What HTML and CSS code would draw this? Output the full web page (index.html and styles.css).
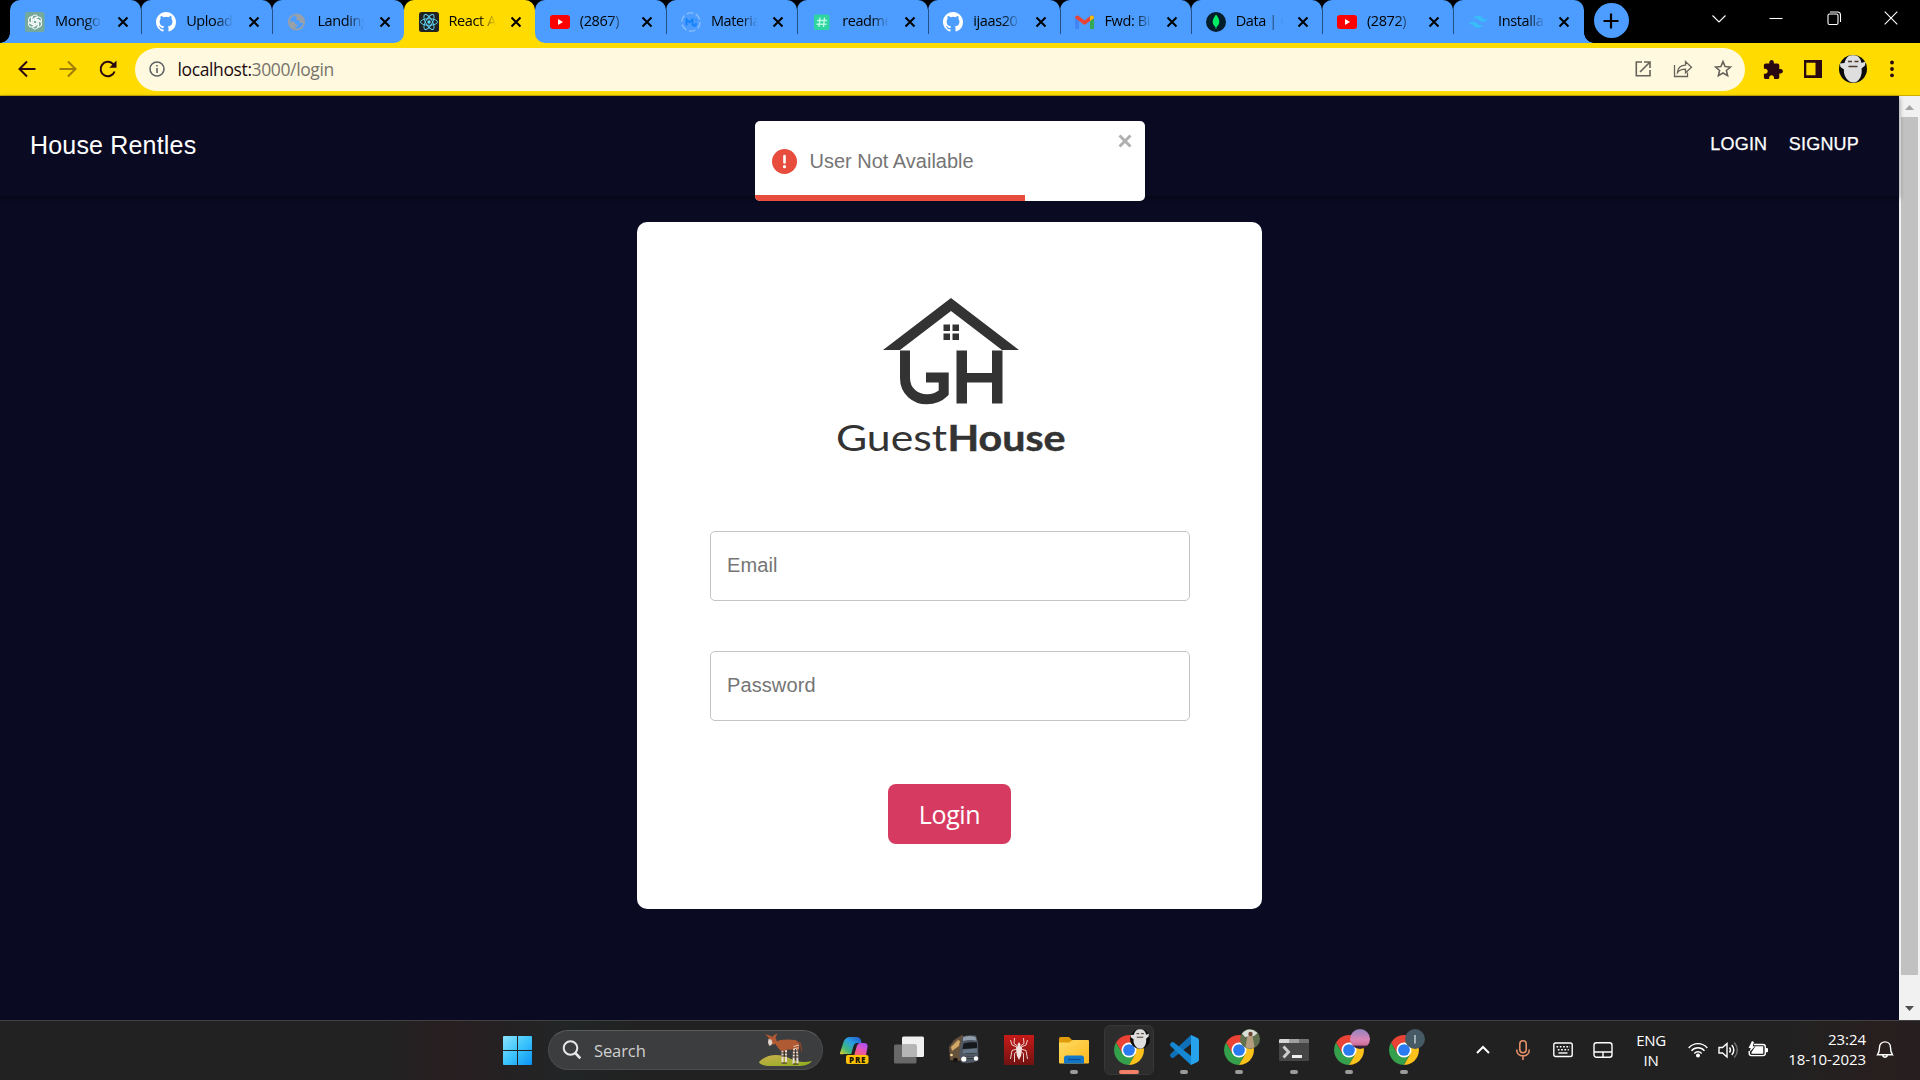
FILE: index.html
```html
<!DOCTYPE html>
<html lang="en">
<head>
<meta charset="utf-8">
<title>React App</title>
<link rel="stylesheet" href="styles.css">
</head>
<body>
<svg class="defs" aria-hidden="true">
  <defs>
    <linearGradient id="win" x1="0" y1="0" x2="1" y2="1"><stop offset="0" stop-color="#8be3fd"/><stop offset=".5" stop-color="#3cc4fc"/><stop offset="1" stop-color="#0a93f2"/></linearGradient>
    <linearGradient id="cop1" x1="0" y1="1" x2="1" y2="0"><stop offset="0" stop-color="#e8d42a"/><stop offset=".3" stop-color="#3fb67c"/><stop offset=".6" stop-color="#2b9fe0"/><stop offset="1" stop-color="#1f55d0"/></linearGradient>
    <linearGradient id="cop2" x1="0" y1="1" x2=".6" y2="0"><stop offset="0" stop-color="#f5655e"/><stop offset=".5" stop-color="#e956b0"/><stop offset="1" stop-color="#b14ff0"/></linearGradient>
    <linearGradient id="fold" x1="0" y1="0" x2="1" y2="1"><stop offset="0" stop-color="#ffdc63"/><stop offset="1" stop-color="#fbb81e"/></linearGradient>
    <linearGradient id="spi" x1="0" y1="0" x2="0" y2="1"><stop offset="0" stop-color="#c81a17"/><stop offset="1" stop-color="#701312"/></linearGradient>
    <linearGradient id="sky" x1="0" y1="0" x2="0" y2="1"><stop offset="0" stop-color="#8f84c0"/><stop offset=".55" stop-color="#dc86b6"/><stop offset=".8" stop-color="#cf6c98"/><stop offset=".86" stop-color="#3c2440"/><stop offset="1" stop-color="#30203a"/></linearGradient>
    <linearGradient id="hill" x1="0" y1="0" x2="1" y2="1"><stop offset="0" stop-color="#c9ae4e"/><stop offset="1" stop-color="#8fae1c"/></linearGradient>
    <symbol id="x" viewBox="0 0 12 12"><path d="M1.500 1.500 10.500 10.500M10.500 1.500 1.500 10.500" stroke="#000" stroke-width="2" fill="none"/></symbol>
    <symbol id="github" viewBox="0 0 16 16"><path fill="#fff" d="M8 0C3.58 0 0 3.58 0 8c0 3.54 2.29 6.53 5.47 7.59.4.07.55-.17.55-.38 0-.19-.01-.82-.01-1.49-2.01.37-2.53-.49-2.69-.94-.09-.23-.48-.94-.82-1.13-.28-.15-.68-.52-.01-.53.63-.01 1.08.58 1.23.82.72 1.21 1.87.87 2.33.66.07-.52.28-.87.51-1.07-1.78-.2-3.64-.89-3.64-3.95 0-.87.31-1.59.82-2.15-.08-.2-.36-1.02.08-2.12 0 0 .67-.21 2.2.82a7.42 7.42 0 0 1 4 0c1.53-1.04 2.2-.82 2.2-.82.44 1.1.16 1.92.08 2.12.51.56.82 1.27.82 2.15 0 3.07-1.87 3.75-3.65 3.95.29.25.54.73.54 1.48 0 1.07-.01 1.93-.01 2.2 0 .21.15.46.55.38A8.01 8.01 0 0 0 16 8c0-4.42-3.58-8-8-8z"/></symbol>
    <symbol id="youtube" viewBox="0 0 20 20"><rect x="0" y="3" width="20" height="14" rx="3" fill="#f00"/><path fill="#fff" d="M8 7v6l5-3z"/></symbol>
    <symbol id="chrome" viewBox="2 2 44 44"><path fill="#ea4335" d="M24 24V13H43.05A22 22 0 0 0 4.95 13l9.52 16.5z"/><path fill="#34a04c" d="M24 24 14.47 29.5 4.95 13A22 22 0 0 0 24 46l9.53-16.5z"/><path fill="#fcc21b" d="M24 24l9.53 5.5L24 46A22 22 0 0 0 43.05 13H24z"/><circle cx="24" cy="24" r="11" fill="#fff"/><circle cx="24" cy="24" r="8.6" fill="#2a7bf0"/></symbol>
    <symbol id="ghost" viewBox="0 0 28 28"><circle cx="14" cy="14" r="14" fill="#0b0b0b"/><path fill="#dedede" d="M5.500 8C7 2 10 .3 14 .3S21.500 2 22.500 8l4-1.500-.5 4-3.500 3c1 5.500-1.500 13-7 14C9 28.500 4 20 5 14.500L1.500 12 .8 8.500z"/><path d="M9 6.500h4M15.500 6.500h4M9.500 11.500h9" stroke="#4b3b2c" stroke-width="1.400"/></symbol>
    <path id="petal" d="M7 11.700V6.200q0-3.200 3-3.200 1.700 0 2.700 1.300L8.300 6.900v4.200"/>
  </defs>
</svg>

<header class="tabstrip">
  <div class="tabs">
    <div class="slot first"><div class="tab"><svg class="fav" viewBox="0 0 20 20"><rect width="19.500" height="20" rx="2.500" fill="#75a99c"/><g fill="none" stroke="#fff" stroke-width=".95"><use href="#petal"/><use href="#petal" transform="rotate(60 10 10)"/><use href="#petal" transform="rotate(120 10 10)"/><use href="#petal" transform="rotate(180 10 10)"/><use href="#petal" transform="rotate(240 10 10)"/><use href="#petal" transform="rotate(300 10 10)"/></g></svg><span class="title">Mongo</span><svg class="x"><use href="#x"/></svg></div></div>
    <div class="slot"><div class="tab line"><svg class="fav"><use href="#github"/></svg><span class="title">Upload</span><svg class="x"><use href="#x"/></svg></div></div>
    <div class="slot before"><div class="tab line"><svg class="fav" viewBox="0 0 20 20"><circle cx="9.500" cy="10" r="7.700" fill="none" stroke="#98a0aa" stroke-width="1.800"/><path fill="#98a0aa" d="M2 9.500h4q1.500 0 2 1.500t2 1.500v2q-2 0-2 3-6-1-6-8zM8 2.500q0 2 1.500 2.500v2q0 1.500 1.500 1.500h1.500v1.500q0 1 1.500 1h3q1-6-4-8-2-1-5-.5z"/></svg><span class="title">Landing</span><svg class="x"><use href="#x"/></svg></div></div>
    <div class="slot"><div class="tab active"><svg class="fav" viewBox="0 0 20 20"><rect width="20" height="20" rx="2.500" fill="#222"/><circle cx="10" cy="10" r="1.700" fill="#61dafb"/><g fill="none" stroke="#61dafb" stroke-width=".9"><ellipse cx="10" cy="10" rx="8.500" ry="3.300"/><ellipse cx="10" cy="10" rx="8.500" ry="3.300" transform="rotate(60 10 10)"/><ellipse cx="10" cy="10" rx="8.500" ry="3.300" transform="rotate(120 10 10)"/></g></svg><span class="title">React A</span><svg class="x"><use href="#x"/></svg></div></div>
    <div class="slot after"><div class="tab"><svg class="fav"><use href="#youtube"/></svg><span class="title">(2867)</span><svg class="x"><use href="#x"/></svg></div></div>
    <div class="slot"><div class="tab line"><svg class="fav" viewBox="0 0 20 20"><circle cx="10" cy="10" r="9.200" fill="none" stroke="#8abffb" stroke-width="1.300" stroke-dasharray="7 2.600"/><path d="M5.500 13.500V7.500l3 2.800 3-2.800v4c0 3 3.500 3 3.500 0V11M15 7.500v1" fill="none" stroke="#1482fb" stroke-width="1.900"/></svg><span class="title">Materia</span><svg class="x"><use href="#x"/></svg></div></div>
    <div class="slot"><div class="tab line"><svg class="fav" viewBox="0 0 20 20"><rect x="2" y="2.500" width="15.500" height="15.500" rx="2" fill="#2fd5a0"/><path d="M8 5.500 7 15M12.500 5.500l-1 9.500M5 8.500h10M4.500 12.200h10" stroke="#b9fbe0" stroke-width="1.400"/></svg><span class="title">readme</span><svg class="x"><use href="#x"/></svg></div></div>
    <div class="slot"><div class="tab line"><svg class="fav"><use href="#github"/></svg><span class="title">ijaas20</span><svg class="x"><use href="#x"/></svg></div></div>
    <div class="slot"><div class="tab line"><svg class="fav" viewBox="0 0 20 20"><path fill="#4285f4" d="M0 6l4 3v8H1.500Q0 17 0 15.500z"/><path fill="#34a853" d="M15 9l4-3v9.500q0 1.500-1.500 1.500H15z"/><path fill="#ea4335" d="M0 6q0-3 3-2.500l6.500 5 6.500-5Q19 3 19 6l-9.500 7z"/><path fill="#fbbc04" d="M15 4.300Q19 2 19 6l-4 3z"/></svg><span class="title">Fwd: Bi</span><svg class="x"><use href="#x"/></svg></div></div>
    <div class="slot"><div class="tab line"><svg class="fav" viewBox="0 0 20 20"><circle cx="10" cy="10" r="10" fill="#021e2b"/><path fill="#00ed64" d="M10 2.500c2 2.500 3.300 4.500 3.300 7.200 0 2.500-1.300 4-2.800 5.300L10.300 17h-.6l-.2-2C8 13.700 6.700 12.200 6.700 9.700 6.700 7 8.500 5 10 2.500z"/></svg><span class="title">Data | C</span><svg class="x"><use href="#x"/></svg></div></div>
    <div class="slot"><div class="tab line"><svg class="fav"><use href="#youtube"/></svg><span class="title">(2872)</span><svg class="x"><use href="#x"/></svg></div></div>
    <div class="slot last"><div class="tab line"><svg class="fav" viewBox="0 0 54 54"><path fill="#38bdf8" transform="translate(0 10)" d="M27 0c-7.200 0-11.700 3.600-13.500 10.800 2.700-3.600 5.850-4.950 9.450-4.050 2.050.51 3.520 2 5.150 3.650C30.740 13.090 33.800 16.200 40.500 16.200c7.200 0 11.700-3.600 13.500-10.800-2.700 3.600-5.850 4.950-9.450 4.050-2.050-.51-3.520-2-5.150-3.650C36.760 3.110 33.700 0 27 0zM13.500 16.200C6.300 16.200 1.800 19.800 0 27c2.700-3.600 5.850-4.950 9.450-4.050 2.050.51 3.520 2 5.150 3.650 2.640 2.690 5.700 5.800 12.400 5.800 7.200 0 11.700-3.600 13.500-10.800-2.700 3.600-5.850 4.950-9.450 4.050-2.050-.51-3.520-2-5.150-3.650-2.640-2.690-5.700-5.800-12.400-5.800z"/></svg><span class="title">Installa</span><svg class="x"><use href="#x"/></svg></div></div>
  </div>
  <button class="newtab"><svg width="16" height="16" viewBox="0 0 16 16"><path d="M8 .5v15M.5 8h15" stroke="#000" stroke-width="2.200"/></svg></button>
  <div class="winctl">
    <svg width="14" height="14" viewBox="0 0 14 14"><path d="M.5 4.500 7 11l6.500-6.500"/></svg>
    <svg width="14" height="14" viewBox="0 0 14 14"><path d="M.5 7.500h13"/></svg>
    <svg width="14" height="14" viewBox="0 0 14 14"><rect x="1" y="3" width="10" height="10.500" rx="1.500"/><path d="M3 1h7.500q3 0 3 3v7"/></svg>
    <svg width="14" height="14" viewBox="0 0 14 14"><path d="M.7.700l12.600 12.600M13.300.700.700 13.300"/></svg>
  </div>
</header>

<nav class="toolbar">
  <div class="navbtns">
    <svg width="18" height="18" viewBox="0 0 18 18"><path d="M17.500 9H2M9 1.500 1.500 9 9 16.500"/></svg>
    <svg class="dim" width="18" height="18" viewBox="0 0 18 18"><path d="M.5 9H16M9 1.500 16.500 9 9 16.500"/></svg>
    <svg width="18" height="18" viewBox="0 0 18 18"><path d="M15.600 11.500A7.200 7.200 0 1 1 13.800 3.800L15.500 5.500"/><path d="M17.500.5v7.200h-7.200z" class="solid"/></svg>
  </div>
  <div class="omnibox">
    <svg width="16" height="16" viewBox="0 0 16 16" fill="none" stroke="#5f6368"><circle cx="8" cy="8" r="7" stroke-width="1.600"/><path d="M8 7v5M8 4v1.600" stroke-width="1.600"/></svg>
    <span class="url">localhost:<i>3000/login</i></span>
    <div class="omniacts">
      <svg width="20" height="20" viewBox="0 0 20 20"><path d="M9 3H3.300v13.700H17V11M11 3h6v6M17 3 7 13"/></svg>
      <svg width="20" height="20" viewBox="0 0 20 20"><path d="M1.500 6v11.500h13v-4M4.500 13.500c.5-5 3.500-7.300 8-7.300V2.500l6 5.700-6 5.500v-3.500c-3.500 0-6 .5-8 3.300z" stroke-width="1.300"/></svg>
      <svg width="20" height="20" viewBox="0 0 20 20"><path d="M10 2.600 12.100 7.500l5.300.5-4 3.500 1.200 5.200L10 14l-4.600 2.700 1.200-5.200-4-3.500 5.300-.5z"/></svg>
    </div>
  </div>
  <div class="tools">
    <svg width="19" height="19" viewBox="1 1 21 21"><path fill="#2a0812" d="M20.500 11H19V7c0-1.100-.9-2-2-2h-4V3.500C13 2.120 11.880 1 10.500 1S8 2.120 8 3.500V5H4c-1.100 0-2 .9-2 2v3.800h1.500c1.490 0 2.700 1.210 2.700 2.700s-1.210 2.700-2.700 2.700H2V20c0 1.100.9 2 2 2h3.800v-1.500c0-1.490 1.210-2.700 2.700-2.700s2.700 1.210 2.700 2.700V22H17c1.100 0 2-.9 2-2v-4h1.500c1.380 0 2.500-1.120 2.500-2.500S21.880 11 20.500 11z"/></svg>
    <svg width="18" height="18" viewBox="0 0 18 18"><path fill="#2a0812" fill-rule="evenodd" d="M0 0h18v18H0zM2.300 2.800v12.400h9.200V2.800z"/></svg>
    <svg width="28" height="28"><use href="#ghost"/></svg>
    <svg width="6" height="18" viewBox="0 0 6 18" fill="#2a0812"><circle cx="3" cy="2.500" r="1.900"/><circle cx="3" cy="9" r="1.900"/><circle cx="3" cy="15.300" r="1.900"/></svg>
  </div>
</nav>

<div class="viewport">
  <main class="page">
    <div class="appbar">
      <h1>House Rentles</h1>
      <div class="links"><a>LOGIN</a><a>SIGNUP</a></div>
    </div>
    <form class="card">
      <svg class="logo" width="240" height="170" viewBox="0 0 240 170">
        <g fill="#333">
          <path d="M53 60 121 8l68 52h-17L121 21 70 60z"/>
          <rect x="113.500" y="34.500" width="6.500" height="6.500"/><rect x="122.500" y="34.500" width="6.500" height="6.500"/><rect x="113.500" y="43.500" width="6.500" height="6.500"/><rect x="122.500" y="43.500" width="6.500" height="6.500"/>
          <rect x="126.500" y="60.500" width="10.500" height="53"/><rect x="162" y="60.500" width="10.500" height="53"/><rect x="136" y="83" width="27" height="9.500"/>
        </g>
        <path d="M75 60.500V88c0 13 10 21.300 22 21.300 7 0 12.500-2.300 16.700-6.500V87.500H96" fill="none" stroke="#333" stroke-width="10"/>
        <text x="6" y="160.500" class="word light" textLength="111" lengthAdjust="spacingAndGlyphs">Guest</text>
        <text x="117.500" y="160.500" class="word bold" textLength="118" lengthAdjust="spacingAndGlyphs">House</text>
      </svg>
      <input class="field" type="text" placeholder="Email">
      <input class="field" type="text" placeholder="Password">
      <button class="submit" type="button">Login</button>
    </form>
    <div class="toast">
      <div class="toastrow">
        <svg width="25" height="25" viewBox="0 0 25 25"><circle cx="12.500" cy="12.500" r="12.500" fill="#e74c3c"/><path d="M12.500 7v6.500" stroke="#fff" stroke-width="2.600" stroke-linecap="round"/><circle cx="12.500" cy="17.700" r="1.600" fill="#fff"/></svg>
        <span>User Not Available</span>
        <svg class="dismiss" width="14" height="14" viewBox="0 0 14 14"><path d="M1.500 1.500l11 11M12.500 1.500l-11 11" stroke="#b0b0b0" stroke-width="2.900"/></svg>
      </div>
      <div class="progress"></div>
    </div>
  </main>
  <div class="scrollbar"><span class="arrow up"></span><span class="thumb"></span><span class="arrow down"></span></div>
</div>

<footer class="taskbar">
  <svg class="start" width="29" height="29" viewBox="0 0 29 29"><path fill="url(#win)" d="M1 0h13v14H0V1Q0 0 1 0zM15 0h13q1 0 1 1v13H15zM0 15h14v14H1q-1 0-1-1zM15 15h14v13q0 1-1 1H15z"/></svg>
  <div class="search">
    <svg width="20" height="20" viewBox="0 0 20 20" fill="none" stroke="#e8e8e8"><circle cx="8.500" cy="8" r="6.800" stroke-width="2"/><path d="M13.300 13l5 5.300" stroke-width="2.600"/></svg>
    <span>Search</span>
    <svg class="okapi" width="54" height="34" viewBox="0 0 54 34">
      <path fill="url(#hill)" d="M0 29C7 21 20 20 30 25c8 4 15 5 23 3-3 4-8 5-15 5H12C6 33 1 32 0 29z"/>
      <path d="M23.500 16v14M27 17v13M35 16l-.5 15M38 14l.5 17" stroke="#e8ddd2" stroke-width="2"/>
      <path d="M22.500 20h5.500M22.500 23h5.500M33.500 18h6M33.500 21h6M33.500 24h6M22.500 30h5.500M34 31h5.500" stroke="#3d2519" stroke-width="1.200"/>
      <path fill="#b05a34" d="M9.500 4.500 6 1.200l5 1.300 1.500 1h1.500l1-1.500L18.500.5 16.500 4.500l1.500 4q2-1.500 6-1.800 7-.7 12 .3 4 1 4.500 6l-1 5-3-2.500q-3 1.500-8 1l-4 2-3.500-1.500q-2.500-2.500-4.500-6l-2.500.5-3-1.500z"/>
      <path fill="#e3d3c9" d="M9.500 6l3 .8 1 3.200-1.500 2.500h-2L9 9.500z"/>
      <path d="M40 9q2.500 2.500 2.500 9.500" stroke="#8b4528" stroke-width="1.200" fill="none"/>
      <path d="M34.500 13.500l5.500-1.500M34.500 15.800l5.500-1" stroke="#efe2d8" stroke-width=".8"/>
    </svg>
  </div>
  <div class="apps">
    <div class="app"><svg width="30" height="30" viewBox="0 0 30 30"><path fill="url(#cop1)" d="M1 18 4.500 7Q6.500 2 11 2h7q4 0 4.500 6H18q-2.500 0-3.500 3l-2.300 8H5Q0 20 1 18z"/><path fill="url(#cop2)" d="M15.500 19 18 10.500q.8-2.500 3-2.500h4q4 0 3.500 4L27 20H15.500z"/><rect x="7" y="20" width="22.500" height="9" rx="2" fill="#fdc307"/><text x="10" y="27.500" class="pre" textLength="16.500">PRE</text></svg></div>
    <div class="app"><svg width="30" height="30" viewBox="0 0 30 30"><rect x="8" y="1.500" width="22" height="20.500" rx="1.500" fill="#f0f0f0"/><rect y="9.500" width="22.500" height="19" rx="1.500" fill="#747474" opacity=".85"/><path d="M8 9.500h14.500V22H8z" fill="#b5b5b5"/></svg></div>
    <div class="app"><svg width="30" height="30" viewBox="0 0 30 30"><path fill="#66513a" d="M0 12l5-7 8-5 2 2-2 24-12-1z"/><path fill="#d3a765" d="M2 12l7-7 2 1-1 5-7 5z"/><path fill="#4e5762" d="M13 2q3-2.500 14-1.500l2 7 .5 18q-8 4-17 2L10 20z"/><path fill="#15181d" d="M14.500 8.500q7-2 13.500-1v5.500L13.500 14z"/><path fill="#8f9caa" d="M14 2.500q6-2.500 12.500-.5l1 3.500q-7-1-13.500.5z"/><path fill="#667587" d="M14 14.500l14-1v4l-14 1z"/><path fill="#2a3038" d="M16 18.500h10V24H16z"/><path d="M16 20h10M16 22.200h10" stroke="#8d98a5" stroke-width=".8"/><circle cx="14.800" cy="24" r="2.600" fill="#fff"/><circle cx="27" cy="23.500" r="2.200" fill="#fff"/><circle cx="6.500" cy="25" r="2.300" fill="#15130f"/><circle cx="2.500" cy="20" r="1.300" fill="#ffe3a5"/></svg></div>
    <div class="app"><svg width="30" height="30" viewBox="0 0 30 30"><path fill="url(#spi)" d="M0 0h30v30H0z"/><path fill="#f3e4e2" d="M15 7l1.500 2.500-.5 1.500 2 1.500-.8 8L15 25l-2.200-4.500-.8-8 2-1.500-.5-1.500z"/><path d="M13.500 11 10 8.500 10.500 3M16.500 11 20 8.500 19.500 3M13 12 8 10 6.500 5M17 12l5-2 1.500-5M13 14l-5 1.500L6.500 24M17 14l5 1.500L23.500 24M13 16.500l-2.500 2V27M17 16.500l2.500 2V27" stroke="#f3e4e2" stroke-width=".9" fill="none"/></svg></div>
    <div class="app run"><svg width="30" height="30" viewBox="0 0 30 30"><path fill="#e09b0a" d="M0 3.500Q0 2 1.500 2H10l3.500 3.500L10 9H0z"/><path fill="url(#fold)" d="M0 7.500h10.500L13.500 5H29q1 0 1 1v21.500q0 1-1 1H1q-1 0-1-1z"/><path fill="#1277c9" d="M5 28.500V23q0-2.500 2.500-2.500h15Q25 20.500 25 23v5.500z"/><path d="M9 24.500h12.500" stroke="#0a4f93" stroke-width="1.300"/></svg></div>
    <div class="app run current"><svg width="30" height="30"><use href="#chrome"/></svg><svg class="badge" width="20" height="20"><use href="#ghost"/></svg></div>
    <div class="app run"><svg width="30" height="30" viewBox="0 0 30 30"><path fill="#0f70b8" d="M22 0 2 18.500q-2 1.500-.5 3l1 1.200q1 .8 2.500-.3L22 9z"/><path fill="#1687d3" d="M22 30 2 11.500Q0 10 1.500 8.500l1-1.200q1-.8 2.500.3L22 21z"/><path fill="#27a3ee" d="M22 0l6.500 3q1.500.8 1.500 2.500v19q0 1.700-1.500 2.500L22 30z"/></svg></div>
    <div class="app run"><svg width="30" height="30"><use href="#chrome"/></svg><svg class="badge" width="20" height="20" viewBox="0 0 20 20"><circle cx="10" cy="10" r="10" fill="#617150"/><path fill="#d9dfd9" d="M2 4.500Q9-3 17.500 4L14 7 5 8z"/><path fill="#b59d80" d="M7.500 7h5l2 11q-5 3-9 0z"/><circle cx="10.500" cy="5" r="2.200" fill="#6d4532"/></svg></div>
    <div class="app run"><svg width="30" height="30" viewBox="0 0 30 30"><path fill="#464646" d="M0 4h30v20.500q0 1.500-1.500 1.500h-27Q0 26 0 24.500z"/><path fill="#d5d5d5" d="M1 4h9v4H0V5z"/><path fill="#a0a0a0" d="M10 4h10v4H10z"/><path fill="#747474" d="M20 4h9l1 1v3H20z"/><path d="M4.500 11.500l5 5.500-5 5.500" fill="none" stroke="#ccc" stroke-width="3"/><path d="M13 21.500h10" stroke="#eee" stroke-width="3"/></svg></div>
    <div class="app run"><svg width="30" height="30"><use href="#chrome"/></svg><svg class="badge" width="20" height="20" viewBox="0 0 20 20"><circle cx="10" cy="10" r="10" fill="url(#sky)"/></svg></div>
    <div class="app run"><svg width="30" height="30"><use href="#chrome"/></svg><svg class="badge" width="20" height="20" viewBox="0 0 20 20"><circle cx="10" cy="10" r="10" fill="#455a64"/><path d="M10 6v8.500" stroke="#a9b5ba" stroke-width="1.800"/></svg></div>
  </div>
  <div class="tray">
    <svg width="20" height="20" viewBox="0 0 20 20"><path d="M4 13l6-6 6 6" stroke-width="2"/></svg>
    <svg width="20" height="20" viewBox="0 0 20 20" class="mic"><rect x="6.800" y=".8" width="6.400" height="12" rx="3.200"/><path d="M3.700 9.500c0 8.500 12.600 8.500 12.600 0M10 16v4"/></svg>
    <svg width="20" height="20" viewBox="0 0 20 20"><rect x=".8" y="3" width="18.400" height="13.500" rx="1.800"/><path d="M3.500 6.700h13.500M4.800 9.700h11" stroke-dasharray="1.700 1.600"/><path d="M5.500 13h9"/></svg>
    <svg width="20" height="20" viewBox="0 0 20 20"><rect x="1" y="2.800" width="18" height="14.400" rx="2.500"/><path d="M1 12h18M10 12v5"/></svg>
    <div class="lang"><span>ENG</span><span>IN</span></div>
    <div class="status">
      <svg width="20" height="20" viewBox="0 0 20 20"><path d="M.7 8c5-5.800 13.600-5.800 18.600 0M3.500 10.800c3.500-4 9.500-4 13 0M6.300 13.500c2-2.300 5.400-2.300 7.400 0"/><circle cx="10" cy="15.500" r="1.300" fill="#fff"/></svg>
      <svg width="20" height="20" viewBox="0 0 20 20"><path d="M1 7.500h3.500l4.500-4v13.500l-4.500-4H1zM11.500 7.500q2 2.500 0 5M13.800 5q4 5 0 10"/><path d="M16.300 2.500q6 7.500 0 15" opacity=".35"/></svg>
      <svg width="20" height="20" viewBox="0 0 20 20"><path d="M6 4.500h9q2.300 0 2.300 2.300v6.500q0 2.300-2.300 2.300H3.500q-2.300 0-2.300-2.300V11"/><path fill="#fff" stroke="none" d="M7.500 6.300h7.700v7.500H3.500v-1.500zM18 8h1q1 0 1 1v2.200q0 1-1 1h-1zM4 1 .5 8h2.200L1.500 12 7 6.200H4.700L6 2z"/></svg>
    </div>
    <div class="clock"><span>23:24</span><span>18-10-2023</span></div>
    <svg width="18" height="20" viewBox="0 0 18 20"><path d="M1.500 14.800q2-3 2-7.300c0-7.500 11-7.500 11 0q0 4.300 2 7.300zM6.500 15.500q2.500 3.500 5 0"/></svg>
  </div>
</footer>
</body>
</html>
```
FILE: styles.css
```css
* { box-sizing: border-box; }
body {
  margin: 0;
  width: 1920px;
  height: 1080px;
  display: flex;
  flex-direction: column;
  overflow: hidden;
  background: #0a0a23;
  font-family: "Liberation Sans", sans-serif;
}
svg { display: block; flex: none; overflow: visible; }
button { border: 0; padding: 0; }
.defs { position: absolute; width: 0; height: 0; }

/* tab strip */
.tabstrip { display: flex; height: 43px; background: #000; padding-left: 10px; flex: none; }
.tabs { display: flex; width: 1574px; }
.slot { flex: 0 0 131.200px; position: relative; background: linear-gradient(#000 50%, #4c9dff 50%); }
.slot.last { flex: 1; }
.slot.before, .slot.after { background: linear-gradient(#000 50%, #ffdb00 50%); }
.slot.first::before, .slot.last::after {
  content: "";
  position: absolute;
  bottom: 0;
  width: 10px;
  height: 10px;
}
.slot.first::before { right: 100%; background: radial-gradient(circle at 0 0, transparent 9.5px, #4c9dff 10px); }
.slot.last::after { left: 100%; background: radial-gradient(circle at 100% 0, transparent 9.5px, #4c9dff 10px); }
.tab {
  height: 43px;
  display: flex;
  align-items: center;
  padding: 0 0 0 15px;
  border-radius: 10px 10px 0 0;
  background: #4c9dff;
  position: relative;
}
.tab.active { background: #ffdb00; }
.before .tab { border-bottom-right-radius: 10px; }
.after .tab { border-bottom-left-radius: 10px; }
.tab.line::before {
  content: "";
  position: absolute;
  left: 0;
  top: 9px;
  width: 1px;
  height: 25px;
  background: #24508a;
}
.fav { width: 20px; height: 20px; }
.title {
  width: 49px;
  margin-left: 10px;
  white-space: nowrap;
  font: 14.500px/20px "Open Sans", sans-serif;
  letter-spacing: -0.4px;
  padding-bottom: 2px;
  color: #000;
  -webkit-mask-image: linear-gradient(90deg, #000 60%, transparent 96%);
  mask-image: linear-gradient(90deg, #000 60%, transparent 96%);
}
.x { width: 12px; height: 12px; margin-left: 12.500px; }
.last .x { margin-left: 10.500px; }
.newtab {
  width: 35px;
  height: 35px;
  margin: 3px 0 0 9.500px;
  border-radius: 50%;
  background: #4c9dff;
  display: flex;
  align-items: center;
  justify-content: center;
}
.winctl { margin-left: auto; display: flex; gap: 43.500px; padding: 11px 22px 0 0; }
.winctl svg { fill: none; stroke: #fff; stroke-width: 1.100; }

/* toolbar */
.toolbar {
  height: 53px;
  flex: none;
  display: flex;
  align-items: center;
  background: #ffdb00;
  border-bottom: 1px solid #ccae00;
}
.navbtns { width: 135px; display: flex; gap: 22.500px; padding-left: 18px; }
.navbtns svg { fill: none; stroke: #2a0812; stroke-width: 2; }
.navbtns .solid { fill: #2a0812; stroke: none; }
.navbtns .dim { opacity: .45; }
.omnibox {
  width: 1610px;
  height: 43px;
  border-radius: 22px;
  background: #fff9e0;
  display: flex;
  align-items: center;
  padding: 0 12.500px 0 14px;
}
.url { margin-left: 12.500px; font: 17.500px/24px "Open Sans", sans-serif; letter-spacing: -0.38px; color: #200a10; }
.url i { font-style: normal; color: #78736a; }
.omniacts { margin-left: auto; display: flex; gap: 20px; }
.omniacts svg { fill: none; stroke: #666259; stroke-width: 1.600; }
.tools { display: flex; align-items: center; gap: 22px; padding-left: 17.500px; }
.tools svg:nth-child(3) { margin-left: -5px; }
.tools svg:nth-child(4) { margin-left: .5px; }

/* page */
.viewport { flex: 1; display: flex; min-height: 0; }
.page { width: 1899px; position: relative; background: #0a0a23; }
.appbar {
  height: 100px;
  display: flex;
  justify-content: space-between;
  padding: 35px 40px 0 30px;
  color: #fff;
  box-shadow: 0 2px 5px rgba(0, 0, 0, .45);
}
.appbar h1 { margin: 0; font-size: 25px; line-height: 28px; font-weight: 400; letter-spacing: .18px; }
.links { display: flex; gap: 21.500px; font-size: 18px; line-height: 27px; letter-spacing: .2px; -webkit-text-stroke: .25px #fff; }
.card {
  width: 625px;
  height: 687px;
  margin: 26px auto 0;
  border-radius: 10px;
  background: #fff;
  display: flex;
  flex-direction: column;
  align-items: center;
}
.logo { margin: 68px 0 71px 0; }
.word { font-family: Lato, sans-serif; font-size: 37px; fill: #333; }
.word.light { font-weight: 400; }
.word.bold { font-weight: 700; stroke: #333; stroke-width: .5px; }
.field {
  width: 480px;
  height: 70px;
  flex: none;
  margin: 0 0 50px 1px;
  padding: 0 16px 2px;
  border: 1px solid #c4c4c4;
  border-radius: 5px;
  font: 20px "Liberation Sans", sans-serif;
  letter-spacing: .1px;
}
.field::placeholder { color: #757575; }
.submit {
  width: 123px;
  height: 60px;
  margin-top: 13px;
  border-radius: 8px;
  background: #d63a60;
  color: #fff;
  font: 25px/60px "Open Sans", sans-serif;
  letter-spacing: -0.4px;
}
.toast {
  position: absolute;
  left: 755px;
  top: 25px;
  width: 390px;
  height: 80px;
  border-radius: 5px;
  overflow: hidden;
  background: #fff;
  display: flex;
  flex-direction: column;
}
.toastrow { flex: 1; display: flex; align-items: center; padding: 7px 13px 0 17px; font-size: 20px; color: #757575; }
.toastrow span { margin-left: 12.500px; }
.dismiss { margin: 0 0 41px auto; }
.progress { width: 270px; height: 6px; background: #e74c3c; }
.scrollbar { width: 21px; background: #f1f1f1; display: flex; flex-direction: column; align-items: center; }
.thumb { width: 17px; height: 858px; background: #c1c1c1; }
.arrow { width: 9px; height: 5px; }
.up { margin: 9px 0 7px; background: #a3a3a3; clip-path: polygon(50% 0, 100% 100%, 0 100%); }
.down { margin-top: 31px; background: #505050; clip-path: polygon(0 0, 100% 0, 50% 100%); }

/* taskbar */
.taskbar {
  height: 60px;
  flex: none;
  display: flex;
  align-items: center;
  padding: 0 0 1px 503px;
  border-top: 1px solid #414141;
  background: linear-gradient(90deg, #222 0, #222 380px, #271e20 450px, #222526 570px, #212121 640px, #212121 1780px, #281f1f 1880px, #261f1f);
  color: #fff;
  font-family: "Open Sans", sans-serif;
}
.search {
  width: 275px;
  height: 40px;
  margin-left: 16px;
  padding: 0 9px 0 13px;
  border-radius: 20px;
  border: 1px solid #4c4c4d;
  border-top-color: #5c5c5d;
  background: #3c3d3e;
  display: flex;
  align-items: center;
  font-size: 16.500px;
  color: #d0d0d0;
}
.search span { margin-left: 12px; letter-spacing: -.1px; }
.okapi { margin-left: auto; }
.apps { display: flex; margin-left: 3px; }
.app {
  width: 55px;
  height: 50px;
  display: flex;
  align-items: center;
  justify-content: center;
  position: relative;
}
.app.current::before {
  content: "";
  position: absolute;
  inset: 0 2px 0 3px;
  border-radius: 6px;
  border: 1px solid #373737;
  background: #2d2d2d;
}
.app svg { position: relative; }
.app .badge { position: absolute; left: 29px; top: 4px; }
.app.run::after {
  content: "";
  position: absolute;
  left: 23.500px;
  bottom: 1px;
  width: 8px;
  height: 4px;
  border-radius: 2px;
  background: #9b9b9b;
}
.app.current::after { left: 17.500px; width: 20px; background: #f28066; }
.pre { font: 800 8px "Open Sans", sans-serif; fill: #1d1700; }
.tray { margin-left: 42px; display: flex; align-items: center; gap: 20px; }
.tray svg { fill: none; stroke: #fff; stroke-width: 1.400; }
.tray .mic { stroke: #e38f68; stroke-width: 1.600; }
.lang, .clock { display: flex; flex-direction: column; font-size: 15px; line-height: 20px; letter-spacing: -.3px; }
.lang { align-items: center; width: 36px; }
.status { display: flex; gap: 10px; margin-left: -1px; }
.clock { align-items: flex-end; width: 78px; white-space: nowrap; letter-spacing: -.05px; margin: 0 0 2px; }
.clock + svg { margin-left: -10px; }
```
